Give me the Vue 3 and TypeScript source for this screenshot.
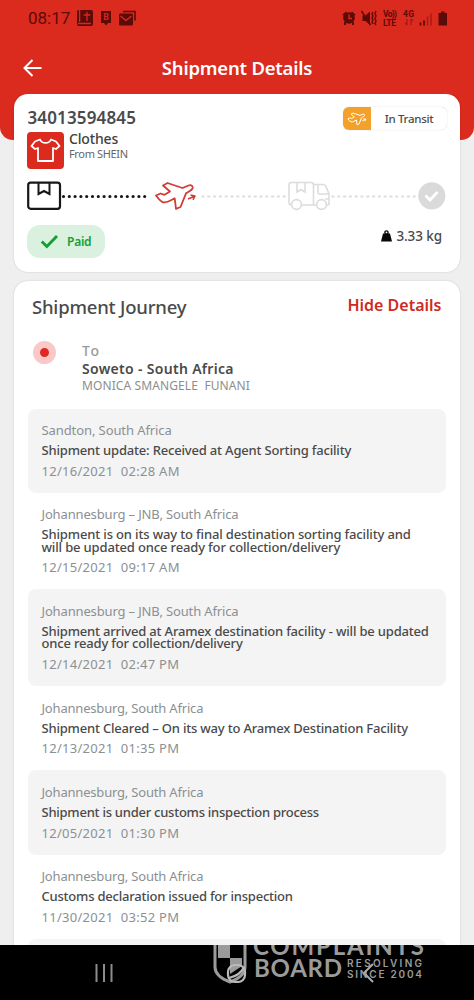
<script setup lang="ts">
interface JourneyEvent {
  place: string
  lines: string[]
  date: string
  time: string
}

const events: JourneyEvent[] = [
  { place: 'Sandton, South Africa', lines: ['Shipment update: Received at Agent Sorting facility'], date: '12/16/2021', time: '02:28 AM' },
  { place: 'Johannesburg – JNB, South Africa', lines: ['Shipment is on its way to final destination sorting facility and', 'will be updated once ready for collection/delivery'], date: '12/15/2021', time: '09:17 AM' },
  { place: 'Johannesburg – JNB, South Africa', lines: ['Shipment arrived at Aramex destination facility - will be updated', 'once ready for collection/delivery'], date: '12/14/2021', time: '02:47 PM' },
  { place: 'Johannesburg, South Africa', lines: ['Shipment Cleared – On its way to Aramex Destination Facility'], date: '12/13/2021', time: '01:35 PM' },
  { place: 'Johannesburg, South Africa', lines: ['Shipment is under customs inspection process'], date: '12/05/2021', time: '01:30 PM' },
  { place: 'Johannesburg, South Africa', lines: ['Customs declaration issued for inspection'], date: '11/30/2021', time: '03:52 PM' },
]
</script>

<template>
  <div class="phone">
    <header class="top">
      <div class="status">
        <span class="clock">08:17</span>
        <svg class="notif" width="60" height="18" viewBox="0 0 60 18">
          <rect x="1" y="1" width="16" height="16" rx="2" fill="#5c0b08" />
          <path d="M11 3v9M7.700 6h6.600M3.600 1v12M2 14.500h13" stroke="#d6281e" stroke-width="1.300" fill="none" />
          <path d="M25 2h10v12h-3l-2 2.500-2-2.500h-3z" fill="#5c0b08" />
          <text x="30" y="11" class="b">B</text>
          <path d="M47 2.500h12v9" stroke="#5c0b08" stroke-width="1.600" fill="none" />
          <rect x="43" y="4.500" width="14" height="12" rx="1.500" fill="#5c0b08" />
          <path d="M44.500 7l5.500 4.500 5.500-4.500" stroke="#d6281e" stroke-width="1.500" fill="none" />
        </svg>
        <svg class="signals" width="108" height="18" viewBox="0 0 108 18">
          <g fill="#5c0b08">
            <circle cx="8" cy="9" r="5.800" />
            <path d="M1.500 5.500l3.500-3 1 1.200-3.500 3zM14.500 5.500l-3.500-3-1 1.200 3.500 3zM3 13h2v3h-2zM11 13h2v3h-2z" />
            <path d="M21.500 6.500h3l4.500-4v13.500l-4.500-4h-3z" />
            <path d="M97.500 4h2.500V2.500h3.500V4h2.500v12.500h-8.500z" />
          </g>
          <path d="M8 5.500v4h3" stroke="#d6281e" stroke-width="1.400" fill="none" />
          <path d="M20.500 2l9 14" stroke="#5c0b08" stroke-width="1.500" />
          <path d="M32 3l-1 2 1 2-1 2 1 2-1 2 1 2M35 2l-1 2.500 1 2.500-1 2.500 1 2.500-1 2.500 1 1.500" stroke="#5c0b08" stroke-width="1.400" fill="none" />
          <text x="42" y="8" class="net" textLength="14">Vo))</text>
          <text x="42" y="16.500" class="net" textLength="13">LTE</text>
          <text x="62" y="8" class="net" textLength="11">4G</text>
          <path d="M66 10v6M64 14l2 2M70 16v-6M72 12l-2-2" stroke="#a01a14" stroke-width="1.200" fill="none" />
          <path d="M79.500 16.500v-3M83 16.500v-5" stroke="#5c0b08" stroke-width="1.800" />
          <path d="M86.500 16.500v-9M90 16.500v-12" stroke="#a71d16" stroke-width="1.500" />
        </svg>
      </div>
      <div class="titlebar">
        <svg width="20" height="20" viewBox="0 0 20 20"><path d="M9.500 2L1.500 10l8 8M1.500 10h17" fill="none" stroke="#fff" stroke-width="2" /></svg>
        <h1>Shipment Details</h1>
      </div>
    </header>

    <main>
      <section class="card summary">
        <div class="head">
          <div class="number">34013594845</div>
          <div class="badge">
            <span class="badge-icon">
              <svg width="20" height="14" viewBox="127 0 44 30"><g fill="none" stroke="#fff" stroke-width="2.200" stroke-linejoin="round"><path d="M129 14.500l4.500-2 4 1.300 5.500-3.300-7-6 4.500-2.500 15 5 6-2.500c3-1 5 1 4 3-1 2-4 3-6.500 4.800L153.500 26l-4.500 1.800-1.300-10.500-4.700 2.400c-3 1.500-5.500 2-7.500 1.500-2.500-1.500-4.500-3.800-6.500-6.700z" /><path d="M160.500 19l8-3.500M163 14.500l5.500 1-2.500 4.500" /></g></svg>
            </span>
            <span class="badge-text">In Transit</span>
          </div>
        </div>
        <div class="product">
          <div class="thumb">
            <svg width="37" height="37" viewBox="0 0 37 37"><path d="M13 7.500c2 4.500 9 4.500 11 0l5 2 3.500 4.500-3.500 3-3-1v13H11V16l-3 1-3.500-3L8 9.500z" fill="none" stroke="#fff" stroke-width="1.800" stroke-linejoin="round" /></svg>
          </div>
          <div>
            <div class="name">Clothes</div>
            <div class="from">From SHEIN</div>
          </div>
        </div>
        <div class="track">
          <svg width="420" height="30" viewBox="0 0 420 30" fill="none">
            <rect x="1.200" y="1.700" width="31.800" height="26.100" rx="2.500" stroke="#171717" stroke-width="2.200" />
            <path d="M11.500 2v11l5.500-3 5.500 3V2" stroke="#171717" stroke-width="2" />
            <path d="M36.500 15.500H119" stroke="#171717" stroke-width="3.200" stroke-dasharray="0 5.800" stroke-linecap="round" />
            <g stroke="#d23b36" stroke-width="1.800" stroke-linejoin="round">
              <path d="M129 14.500l4.500-2 4 1.300 5.500-3.300-7-6 4.500-2.500 15 5 6-2.500c3-1 5 1 4 3-1 2-4 3-6.500 4.800L153.500 26l-4.500 1.800-1.300-10.500-4.700 2.400c-3 1.500-5.500 2-7.500 1.500-2.500-1.500-4.500-3.800-6.500-6.700z" />
              <path d="M161 18l7-3M163.500 14l4.500 1-2 3.800" stroke-width="1.500" />
            </g>
            <path d="M174.500 15.500H260" stroke="#dedede" stroke-width="2.200" stroke-dasharray="3 2.800" />
            <g stroke="#dcdcdc" stroke-width="1.600">
              <path d="M264.500 24c-2 0-2.500-.7-2.500-2.500V4c0-1.500.7-2.500 2.500-2.500h19.500c1.500 0 2.500 1 2.500 2.500v20H274M286.500 3.500h9.500c1.500 0 2.500.7 3 2l3 7.500v9.500c0 1-.7 1.500-2 1.500M286.500 24h3.500" />
              <path d="M291 4v7.500c0 1 .5 1.500 1.500 1.500H302M270 1.500v9.500l4-2.500 4 2.500V1.500M298 18h4" />
              <circle cx="269.500" cy="23.500" r="4.900" /><circle cx="294.500" cy="23.500" r="4.900" />
            </g>
            <path d="M304.500 15.500H390" stroke="#dedede" stroke-width="2.200" stroke-dasharray="3 2.800" />
            <circle cx="404.800" cy="14.800" r="13.600" fill="#dadada" />
            <path d="M398.500 14.500l4.500 4.500 7.500-8" stroke="#fff" stroke-width="2.800" />
          </svg>
        </div>
        <div class="foot">
          <div class="paid">
            <svg width="19" height="14" viewBox="0 0 19 14"><path d="M1.800 6.500l5 5L17 1" fill="none" stroke="#11a034" stroke-width="2.900" /></svg>
            <span>Paid</span>
          </div>
          <div class="weight">
            <svg width="11" height="12" viewBox="0 0 11 12"><path d="M2 3.500h7L11 11.500H0z" fill="#080808" /><circle cx="5.500" cy="2.500" r="1.600" fill="none" stroke="#080808" stroke-width="1.400" /></svg>
            <span>3.33 kg</span>
          </div>
        </div>
      </section>

      <section class="card journey">
        <div class="journey-head">
          <h2>Shipment Journey</h2>
          <a class="hide">Hide Details</a>
        </div>
        <div class="dest">
          <span class="marker"></span>
          <div>
            <div class="to">To</div>
            <div class="city">Soweto - South Africa</div>
            <div class="person">MONICA SMANGELE&nbsp; FUNANI</div>
          </div>
        </div>
        <ol class="events">
          <li v-for="(e, i) in events" :key="i" :class="'event e' + i">
            <div class="place">{{ e.place }}</div>
            <div class="message"><div v-for="l in e.lines" :key="l">{{ l }}</div></div>
            <div class="when">{{ e.date }}&nbsp; {{ e.time }}</div>
          </li>
          <li class="event next"></li>
        </ol>
      </section>
    </main>

    <nav>
      <svg class="recents" width="20" height="20" viewBox="0 0 20 20"><path d="M2.500 1v18M10 1v18M17.500 1v18" stroke="#8c8c8c" stroke-width="2" /></svg>
      <svg class="watermark" width="220" height="55" viewBox="0 0 220 55">
        <g fill="#9b9b9b">
          <path d="M8 0h12v13H8zM20 13h12v8l-12 8z" />
          <path d="M5 0v22c0 8 7 12 15 15 8-3 15-7 15-15V0" fill="none" stroke="#9b9b9b" stroke-width="3" />
          <rect x="18" y="20" width="17" height="17" rx="7" fill="none" stroke="#b9b9b9" stroke-width="2.200" />
          <path d="M19 33c8-2 13-6 15-11" fill="none" stroke="#b9b9b9" stroke-width="2.200" />
          <text x="43" y="9.500" class="big" textLength="171">COMPLAINTS</text>
          <text x="44" y="32" class="big" textLength="88">BOARD</text>
          <text x="137" y="22" class="small" textLength="75">RESOLVING</text>
          <text x="137" y="32.500" class="small" textLength="75">SINCE 2004</text>
        </g>
        <path d="M163 19l-9 9 9 9" fill="none" stroke="#aaa" stroke-width="2" />
      </svg>
    </nav>
  </div>
</template>

<style scoped>
.phone {
  width: 474px;
  height: 1000px;
  overflow: hidden;
  display: flex;
  flex-direction: column;
  background: #efefef;
  color: #4a4a4a;
  font-family: 'Noto Sans', 'Open Sans', sans-serif;
  white-space: nowrap;
}
.top {
  flex: none;
  height: 140px;
  background: #db2a1e;
  border-radius: 0 0 13px 13px;
}
.status { display: flex; align-items: center; height: 18px; padding: 9px 0 0 28px; }
.clock { width: 44px; font: 17px/18px Roboto, sans-serif; color: #5c0b08; }
.notif { margin-left: 4px; }
.signals { margin-left: auto; margin-right: 25px; }
.b { font: bold 9px Roboto, sans-serif; fill: #d6281e; text-anchor: middle; }
.net { font: bold 8.500px Roboto, sans-serif; fill: #5c0b08; }
.titlebar { display: grid; grid-template-columns: 20px 1fr 20px; align-items: center; padding: 0 23px; margin-top: 26px; height: 30px; }
h1 { margin: 0; text-align: center; color: #fff; font-size: 18.500px; line-height: 30px; font-weight: 600; letter-spacing: -0.220px; }
main { flex: 1; min-height: 0; display: flex; flex-direction: column; gap: 9px; margin-top: -46px; padding: 0 14px; overflow: hidden; }
.card { background: #fff; border-radius: 14px; box-shadow: 0 0 2px rgba(0, 0, 0, 0.18); flex: none; }
.summary { height: 178px; }
.head { display: flex; justify-content: space-between; height: 38px; padding: 13px 13px 0 13.500px; box-sizing: border-box; }
.number { font-size: 17px; line-height: 22px; font-weight: 600; letter-spacing: 0.150px; }
.badge { display: flex; width: 104px; height: 23px; border-radius: 6px; overflow: hidden; box-shadow: 0 0 1px #bbb; }
.badge-icon { display: flex; align-items: center; justify-content: center; width: 28px; background: #f3a12b; }
.badge-text { flex: 1; text-align: center; font-size: 11.500px; line-height: 24px; font-weight: 500; letter-spacing: -0.300px; }
.product { display: flex; gap: 5px; padding-left: 13px; height: 37px; }
.thumb { width: 37px; height: 37px; border-radius: 4px; background: #db2a1e; }
.name { font-size: 14px; line-height: 14px; font-weight: 500; color: #3f3f3f; letter-spacing: -0.150px; }
.from { font-size: 11px; line-height: 15px; color: #666; letter-spacing: -0.350px; }
.track { padding: 12px 0 0 13px; height: 30px; }
.foot { display: flex; justify-content: space-between; padding: 14px 18px 0 13px; }
.paid { display: flex; align-items: center; gap: 8px; width: 78px; height: 33px; padding-left: 13px; box-sizing: border-box; border-radius: 13px; background: #daf1e0; color: #11a034; font-size: 12px; font-weight: 600; letter-spacing: -0.250px; }
.weight { display: flex; align-items: center; gap: 4px; height: 22px; font-size: 13.500px; font-weight: 500; }
.weight span { letter-spacing: -0.100px; }
.journey { height: 800px; }
.journey-head { display: flex; justify-content: space-between; padding: 12px 18.500px 0 18px; height: 39px; }
h2 { margin: 0; font-size: 18.500px; line-height: 27px; font-weight: 500; letter-spacing: -0.200px; }
.hide { color: #cf2a24; font-size: 16px; line-height: 25px; font-weight: 600; }
.dest { display: flex; gap: 26px; height: 76.500px; padding: 0 19px; }
.marker { width: 9px; height: 9px; margin-top: 9px; border: 7.500px solid #f9c9c7; border-radius: 50%; background: #df2822; }
.to { margin-top: 8.500px; font-size: 14px; line-height: 19px; font-weight: 500; color: #999; letter-spacing: 1.500px; }
.city { font-size: 14px; line-height: 18px; font-weight: 600; letter-spacing: 0.310px; }
.person { font-size: 12px; line-height: 16px; color: #8d8d8d; letter-spacing: 0.100px; }
.events { list-style: none; margin: 0; padding: 0 14px; }
.event { padding: 11.500px 14px 12.200px 13.500px; border-radius: 8px; }
.event:nth-child(odd) { background: #f4f4f4; }
.place { font-size: 13px; line-height: 20px; color: #8b9093; letter-spacing: -0.190px; }
.e0 .place { letter-spacing: -0.090px; }
.e1 .place, .e2 .place { letter-spacing: -0.150px; }
.message { margin: 4px 0 4.200px; font-size: 13px; line-height: 12.400px; font-weight: 500; letter-spacing: -0.180px; }
.e1 .message { letter-spacing: -0.150px; }
.e3 .message { letter-spacing: -0.190px; }
.e4 .message { letter-spacing: -0.250px; }
.e5 .message { letter-spacing: -0.220px; }
.when { font-size: 13px; line-height: 20px; color: #8b9093; letter-spacing: 0.280px; }
.next { height: 60px; }
nav { position: relative; flex: none; height: 55.500px; background: #000; }
.recents { position: absolute; left: 94px; top: 18px; }
.watermark { position: absolute; left: 210px; top: 0; }
.big { font: 700 24px Lato, sans-serif; }
.small { font: 600 10px Inter, sans-serif; }
</style>

<style>
body { background: #efefef; }
</style>
